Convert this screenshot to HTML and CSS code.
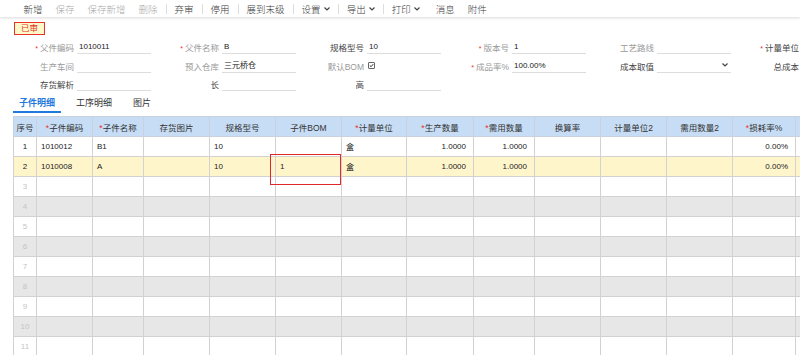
FILE: index.html
```html
<!DOCTYPE html>
<html lang="zh-CN">
<head>
    <meta charset="UTF-8">
    <meta name="viewport" content="width=device-width, initial-scale=1.0">
    <title>BOM</title>
    <link rel="stylesheet" href="styles.css">
</head>
<body>
    <div class="toolbar">
        <span class="tool">新增</span>
        <span class="tool disabled">保存</span>
        <span class="tool disabled">保存新增</span>
        <span class="tool disabled">删除</span>
        <span class="sep"></span>
        <span class="tool">弃审</span>
        <span class="sep"></span>
        <span class="tool">停用</span>
        <span class="sep"></span>
        <span class="tool">展到末级</span>
        <span class="sep"></span>
        <span class="tool">设置<svg class="caret" viewBox="0 0 6 4"><path d="M0.5 0.5 L3 3 L5.5 0.5" /></svg></span>
        <span class="sep"></span>
        <span class="tool">导出<svg class="caret" viewBox="0 0 6 4"><path d="M0.5 0.5 L3 3 L5.5 0.5" /></svg></span>
        <span class="sep"></span>
        <span class="tool">打印<svg class="caret" viewBox="0 0 6 4"><path d="M0.5 0.5 L3 3 L5.5 0.5" /></svg></span>
        <span class="tool msg">消息</span>
        <span class="tool">附件</span>
    </div>

    <div class="status">
        <span class="badge">已审</span>
    </div>

    <div class="form">
        <div class="field"><label class="req">父件编码</label><div class="input">1010011</div></div>
        <div class="field"><label class="req">父件名称</label><div class="input">B</div></div>
        <div class="field"><label class="dark">规格型号</label><div class="input">10</div></div>
        <div class="field"><label class="req">版本号</label><div class="input">1</div></div>
        <div class="field"><label>工艺路线</label><div class="input"></div></div>
        <div class="field"><label class="req dark">计量单位</label><div class="input"></div></div>

        <div class="field"><label>生产车间</label><div class="input"></div></div>
        <div class="field"><label>预入仓库</label><div class="input">三元桥仓</div></div>
        <div class="field"><label>默认BOM</label><div class="input plain"><span class="check"><svg viewBox="0 0 7 7"><path d="M1.2 3.6 L2.9 5.2 L5.9 1.6" /></svg></span></div></div>
        <div class="field"><label class="req">成品率%</label><div class="input">100.00%</div></div>
        <div class="field"><label class="dark">成本取值</label><div class="input select"><span></span><svg class="caret" viewBox="0 0 6 4"><path d="M0.5 0.5 L3 3 L5.5 0.5" /></svg></div></div>
        <div class="field"><label class="dark">总成本</label><div class="input"></div></div>

        <div class="field"><label class="dark">存货解析</label><div class="input"></div></div>
        <div class="field"><label class="dark">长</label><div class="input"></div></div>
        <div class="field"><label class="dark">高</label><div class="input"></div></div>
    </div>

    <div class="tabs">
        <span class="tab active">子件明细</span>
        <span class="tab">工序明细</span>
        <span class="tab">图片</span>
    </div>

    <div class="grid-wrap">
        <table class="grid">
            <colgroup>
                <col style="width:23px"><col style="width:56px"><col style="width:51px"><col style="width:66px">
                <col style="width:66px"><col style="width:66px"><col style="width:65px"><col style="width:67px">
                <col style="width:61px"><col style="width:66px"><col style="width:66px"><col style="width:66px">
                <col style="width:63px"><col style="width:66px">
            </colgroup>
            <thead>
                <tr>
                    <th>序号</th>
                    <th><i>*</i>子件编码</th>
                    <th><i>*</i>子件名称</th>
                    <th>存货图片</th>
                    <th>规格型号</th>
                    <th>子件BOM</th>
                    <th><i>*</i>计量单位</th>
                    <th><i>*</i>生产数量</th>
                    <th><i>*</i>需用数量</th>
                    <th>换算率</th>
                    <th>计量单位2</th>
                    <th>需用数量2</th>
                    <th><i>*</i>损耗率%</th>
                    <th></th>
                </tr>
            </thead>
            <tbody>
                <tr>
                    <td class="no">1</td><td>1010012</td><td>B1</td><td></td><td>10</td><td></td><td>盒</td>
                    <td class="num">1.0000</td><td class="num">1.0000</td><td></td><td></td><td></td><td class="num">0.00%</td><td></td>
                </tr>
                <tr class="current">
                    <td class="no">2</td><td>1010008</td><td>A</td><td></td><td>10</td><td class="marked">1<span class="mark"></span></td><td>盒</td>
                    <td class="num">1.0000</td><td class="num">1.0000</td><td></td><td></td><td></td><td class="num">0.00%</td><td></td>
                </tr>
                <tr class="empty"><td class="no">3</td><td></td><td></td><td></td><td></td><td></td><td></td><td></td><td></td><td></td><td></td><td></td><td></td><td></td></tr>
                <tr class="empty"><td class="no">4</td><td></td><td></td><td></td><td></td><td></td><td></td><td></td><td></td><td></td><td></td><td></td><td></td><td></td></tr>
                <tr class="empty"><td class="no">5</td><td></td><td></td><td></td><td></td><td></td><td></td><td></td><td></td><td></td><td></td><td></td><td></td><td></td></tr>
                <tr class="empty"><td class="no">6</td><td></td><td></td><td></td><td></td><td></td><td></td><td></td><td></td><td></td><td></td><td></td><td></td><td></td></tr>
                <tr class="empty"><td class="no">7</td><td></td><td></td><td></td><td></td><td></td><td></td><td></td><td></td><td></td><td></td><td></td><td></td><td></td></tr>
                <tr class="empty"><td class="no">8</td><td></td><td></td><td></td><td></td><td></td><td></td><td></td><td></td><td></td><td></td><td></td><td></td><td></td></tr>
                <tr class="empty"><td class="no">9</td><td></td><td></td><td></td><td></td><td></td><td></td><td></td><td></td><td></td><td></td><td></td><td></td><td></td></tr>
                <tr class="empty"><td class="no">10</td><td></td><td></td><td></td><td></td><td></td><td></td><td></td><td></td><td></td><td></td><td></td><td></td><td></td></tr>
                <tr class="empty"><td class="no">11</td><td></td><td></td><td></td><td></td><td></td><td></td><td></td><td></td><td></td><td></td><td></td><td></td><td></td></tr>
            </tbody>
        </table>
    </div>
</body>
</html>
```

FILE: styles.css
```css
* {
    box-sizing: border-box;
    margin: 0;
    padding: 0;
}

body {
    font-family: 'Liberation Sans', Arial, 'Noto Sans CJK SC', sans-serif;
    background-color: white;
    color: #333;
    overflow: hidden;
}

/* toolbar */
.toolbar {
    display: flex;
    align-items: center;
    height: 17px;
    padding-left: 17px;
    background-color: white;
    box-shadow: 0 1px 3px rgba(0, 0, 0, 0.15);
    font-size: 9.5px;
    font-weight: 300;
}

.tool {
    display: flex;
    align-items: center;
    padding: 0 6.5px;
    color: #3a3a3a;
    white-space: nowrap;
}

.tool.disabled {
    color: #aaa;
}

.tool.msg {
    margin-left: 3px;
}

.sep {
    width: 1px;
    height: 10px;
    margin: 0 1.5px;
    background-color: #ddd;
}

.caret {
    width: 6px;
    height: 4px;
    margin-left: 3px;
    fill: none;
    stroke: #444;
    stroke-width: 1.2;
}

/* status */
.status {
    display: flex;
    align-items: flex-start;
    height: 23px;
    padding: 5px 0 0 14px;
}

.badge {
    display: block;
    width: 31px;
    height: 13px;
    line-height: 10px;
    text-align: center;
    font-size: 8.5px;
    color: #e03a30;
    background-color: #fff8c8;
    border: 1.5px solid #e8332a;
}

/* header form */
.form {
    display: grid;
    grid-template-columns: repeat(6, 145px);
    row-gap: 4.5px;
    padding-left: 6px;
}

.field {
    display: flex;
    align-items: center;
    gap: 3px;
    height: 14px;
}

.field label {
    width: 68px;
    text-align: right;
    font-size: 8.5px;
    color: #999;
    white-space: nowrap;
}

.field label.dark {
    color: #444;
}

.field label.req::before {
    content: '* ';
    color: #e8332a;
    font-size: 7px;
}

.input {
    width: 74px;
    height: 14px;
    line-height: 13px;
    padding-left: 2px;
    font-size: 8px;
    color: #222;
    border-bottom: 1px solid #ddd;
    white-space: nowrap;
}

.input.plain {
    border-bottom: none;
    display: flex;
    align-items: center;
    padding-left: 1px;
}

.input.select {
    display: flex;
    align-items: center;
    justify-content: space-between;
    padding-right: 3px;
}

.check {
    display: inline-block;
    width: 7px;
    height: 7px;
    border: 1px solid #666;
    border-radius: 1px;
    margin-top: -1px;
}

.check svg {
    display: block;
    width: 5px;
    height: 5px;
    fill: none;
    stroke: #333;
    stroke-width: 1.4;
}

/* tabs */
.tabs {
    display: flex;
    gap: 9px;
    padding-left: 13px;
    margin-top: 5px;
}

.tab {
    padding: 0 6px;
    line-height: 15px;
    font-size: 9px;
    color: #333;
    border-bottom: 2px solid transparent;
}

.tab.active {
    color: #1f7ae0;
    font-weight: bold;
    border-bottom-color: #1f7ae0;
}

/* detail grid */
.grid-wrap {
    width: 787px;
    margin: 3px 0 0 13px;
    overflow: hidden;
}

.grid {
    width: 848px;
    table-layout: fixed;
    border-collapse: collapse;
    font-size: 8px;
}

.grid th,
.grid td {
    height: 20px;
    border: 1px solid #d2d2d2;
    white-space: nowrap;
    overflow: hidden;
}

.grid th {
    background-color: #c7ddf5;
    font-weight: normal;
    font-size: 8.5px;
    color: #333;
    border-color: #c9d2dc;
}

.grid th i {
    font-style: normal;
    color: #e8332a;
}

.grid td {
    padding: 0 4px;
    color: #222;
}

.grid td.no {
    text-align: center;
    padding: 0;
}

.grid td.num {
    text-align: right;
    padding-right: 7px;
}

.grid tr.current td {
    background-color: #fff5cb;
}

.grid tr.empty td.no {
    color: #c4c4c4;
}

.grid tr.empty:nth-child(even) td {
    background-color: #e7e7e7;
}

.grid td.marked {
    position: relative;
    overflow: visible;
}

.mark {
    position: absolute;
    top: -3px;
    left: -6px;
    right: 0;
    bottom: -9px;
    border: 1.5px solid #e0282a;
}
```
